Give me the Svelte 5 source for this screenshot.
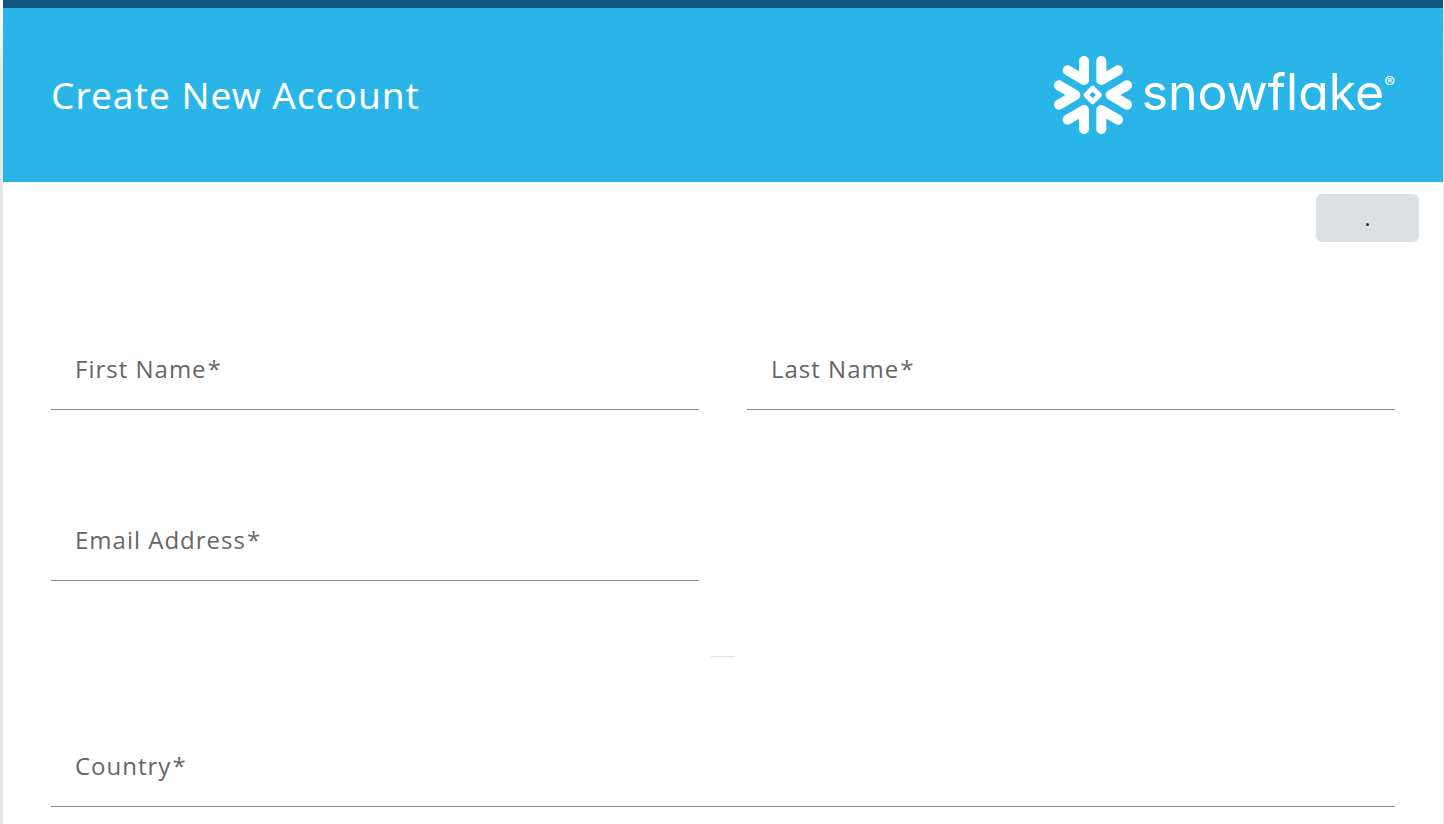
<script lang="ts">
  let firstName = $state('')
  let lastName = $state('')
  let email = $state('')
  let country = $state('')
</script>

<main class="page">
  <header class="banner">
    <h1>Create New Account</h1>
    <div class="logo">
      <svg class="flake" viewBox="27 24 234 234" aria-hidden="true">
        <g fill="none" stroke="#fff" stroke-width="30" stroke-linecap="round" stroke-linejoin="round">
          <path d="M117 39V96L68 67" />
          <path d="M169 39V96L219 67" />
          <path d="M117 243V186L68 215" />
          <path d="M169 243V186L219 215" />
          <path d="M42 112L91 141L42 170" />
          <path d="M246 112L197 141L246 170" />
          <path d="M143 121L163 141L143 161L123 141Z" stroke-width="15" />
        </g>
      </svg>
      <span class="wordmark">snowflake</span>
      <span class="mark">®</span>
    </div>
  </header>

  <form>
    <div class="toolbar">
      <button type="button">.</button>
    </div>

    <div class="fields">
      <div class="field">
        <label for="first-name">First Name<span class="required">*</span></label>
        <input id="first-name" type="text" required bind:value={firstName} />
      </div>
      <div class="field">
        <label for="last-name">Last Name<span class="required">*</span></label>
        <input id="last-name" type="text" required bind:value={lastName} />
      </div>
      <div class="field">
        <label for="email">Email Address<span class="required">*</span></label>
        <input id="email" type="email" required bind:value={email} />
      </div>
    </div>

    <hr />

    <div class="fields last">
      <div class="field wide">
        <label for="country">Country<span class="required">*</span></label>
        <select id="country" required bind:value={country}>
          <option value=""></option>
        </select>
      </div>
    </div>
  </form>
</main>

<style>
  :global(body) {
    background: linear-gradient(#fff, #e6e6e6 72px) no-repeat #e6e6e6;
    font-family: "Open Sans", "Noto Sans", sans-serif;
    letter-spacing: 1px;
  }

  .page {
    box-sizing: border-box;
    min-height: 100vh;
    margin: 0 1px 0 3px;
    background: #fff;
  }

  .banner {
    display: flex;
    align-items: center;
    justify-content: space-between;
    padding: 48px;
    border-top: 8px solid #11567f;
    background: #29b5e8;
    color: #fff;
  }

  h1 {
    margin: 0;
    font-family: "Noto Sans", "Open Sans", sans-serif;
    font-size: 37px;
    font-weight: 400;
    line-height: 48px;
  }

  .logo {
    display: flex;
    align-items: center;
    letter-spacing: normal;
  }

  .flake {
    width: 78px;
    height: 78px;
    margin-right: 10px;
  }

  .wordmark {
    padding-bottom: 6px;
    font-family: Inter, sans-serif;
    font-size: 50px;
    font-weight: 400;
    font-feature-settings: "cv11";
    line-height: 64px;
  }

  .mark {
    align-self: flex-start;
    margin-top: 16px;
    font-family: Inter, sans-serif;
    font-size: 16px;
    line-height: 20px;
  }

  .toolbar {
    display: flex;
    justify-content: flex-end;
    padding: 12px 24px 0;
  }

  button {
    min-width: 103px;
    height: 48px;
    padding: 0 24px;
    border: none;
    border-radius: 6px;
    background: #dce0e3;
    color: #333;
    font: inherit;
    font-size: 20px;
    font-weight: 600;
    cursor: pointer;
  }

  .fields {
    display: grid;
    grid-template-columns: 1fr 1fr;
    gap: 91px 48px;
    padding: 88px 48px 75px;
  }

  .fields.last {
    padding-top: 70px;
    padding-bottom: 0;
  }

  .field {
    display: grid;
    align-items: center;
  }

  .field.wide {
    grid-column: 1 / -1;
  }

  label,
  input,
  select {
    grid-area: 1 / 1;
  }

  label {
    z-index: 1;
    padding: 0 24px 2px;
    color: #666;
    font-size: 24px;
    line-height: 32px;
    pointer-events: none;
  }

  .required {
    margin-left: 1px;
  }

  input,
  select {
    box-sizing: border-box;
    width: 100%;
    height: 80px;
    padding: 0 24px;
    border: none;
    border-bottom: 1px solid #8c8c8c;
    border-radius: 0;
    outline: none;
    background: transparent;
    color: #333;
    font: inherit;
    font-size: 24px;
    appearance: none;
  }

  input:focus,
  select:focus {
    border-bottom-color: #29b5e8;
  }

  hr {
    width: 24px;
    height: 1px;
    margin: 0 auto;
    border: none;
    background: #dce0e3;
  }
</style>
